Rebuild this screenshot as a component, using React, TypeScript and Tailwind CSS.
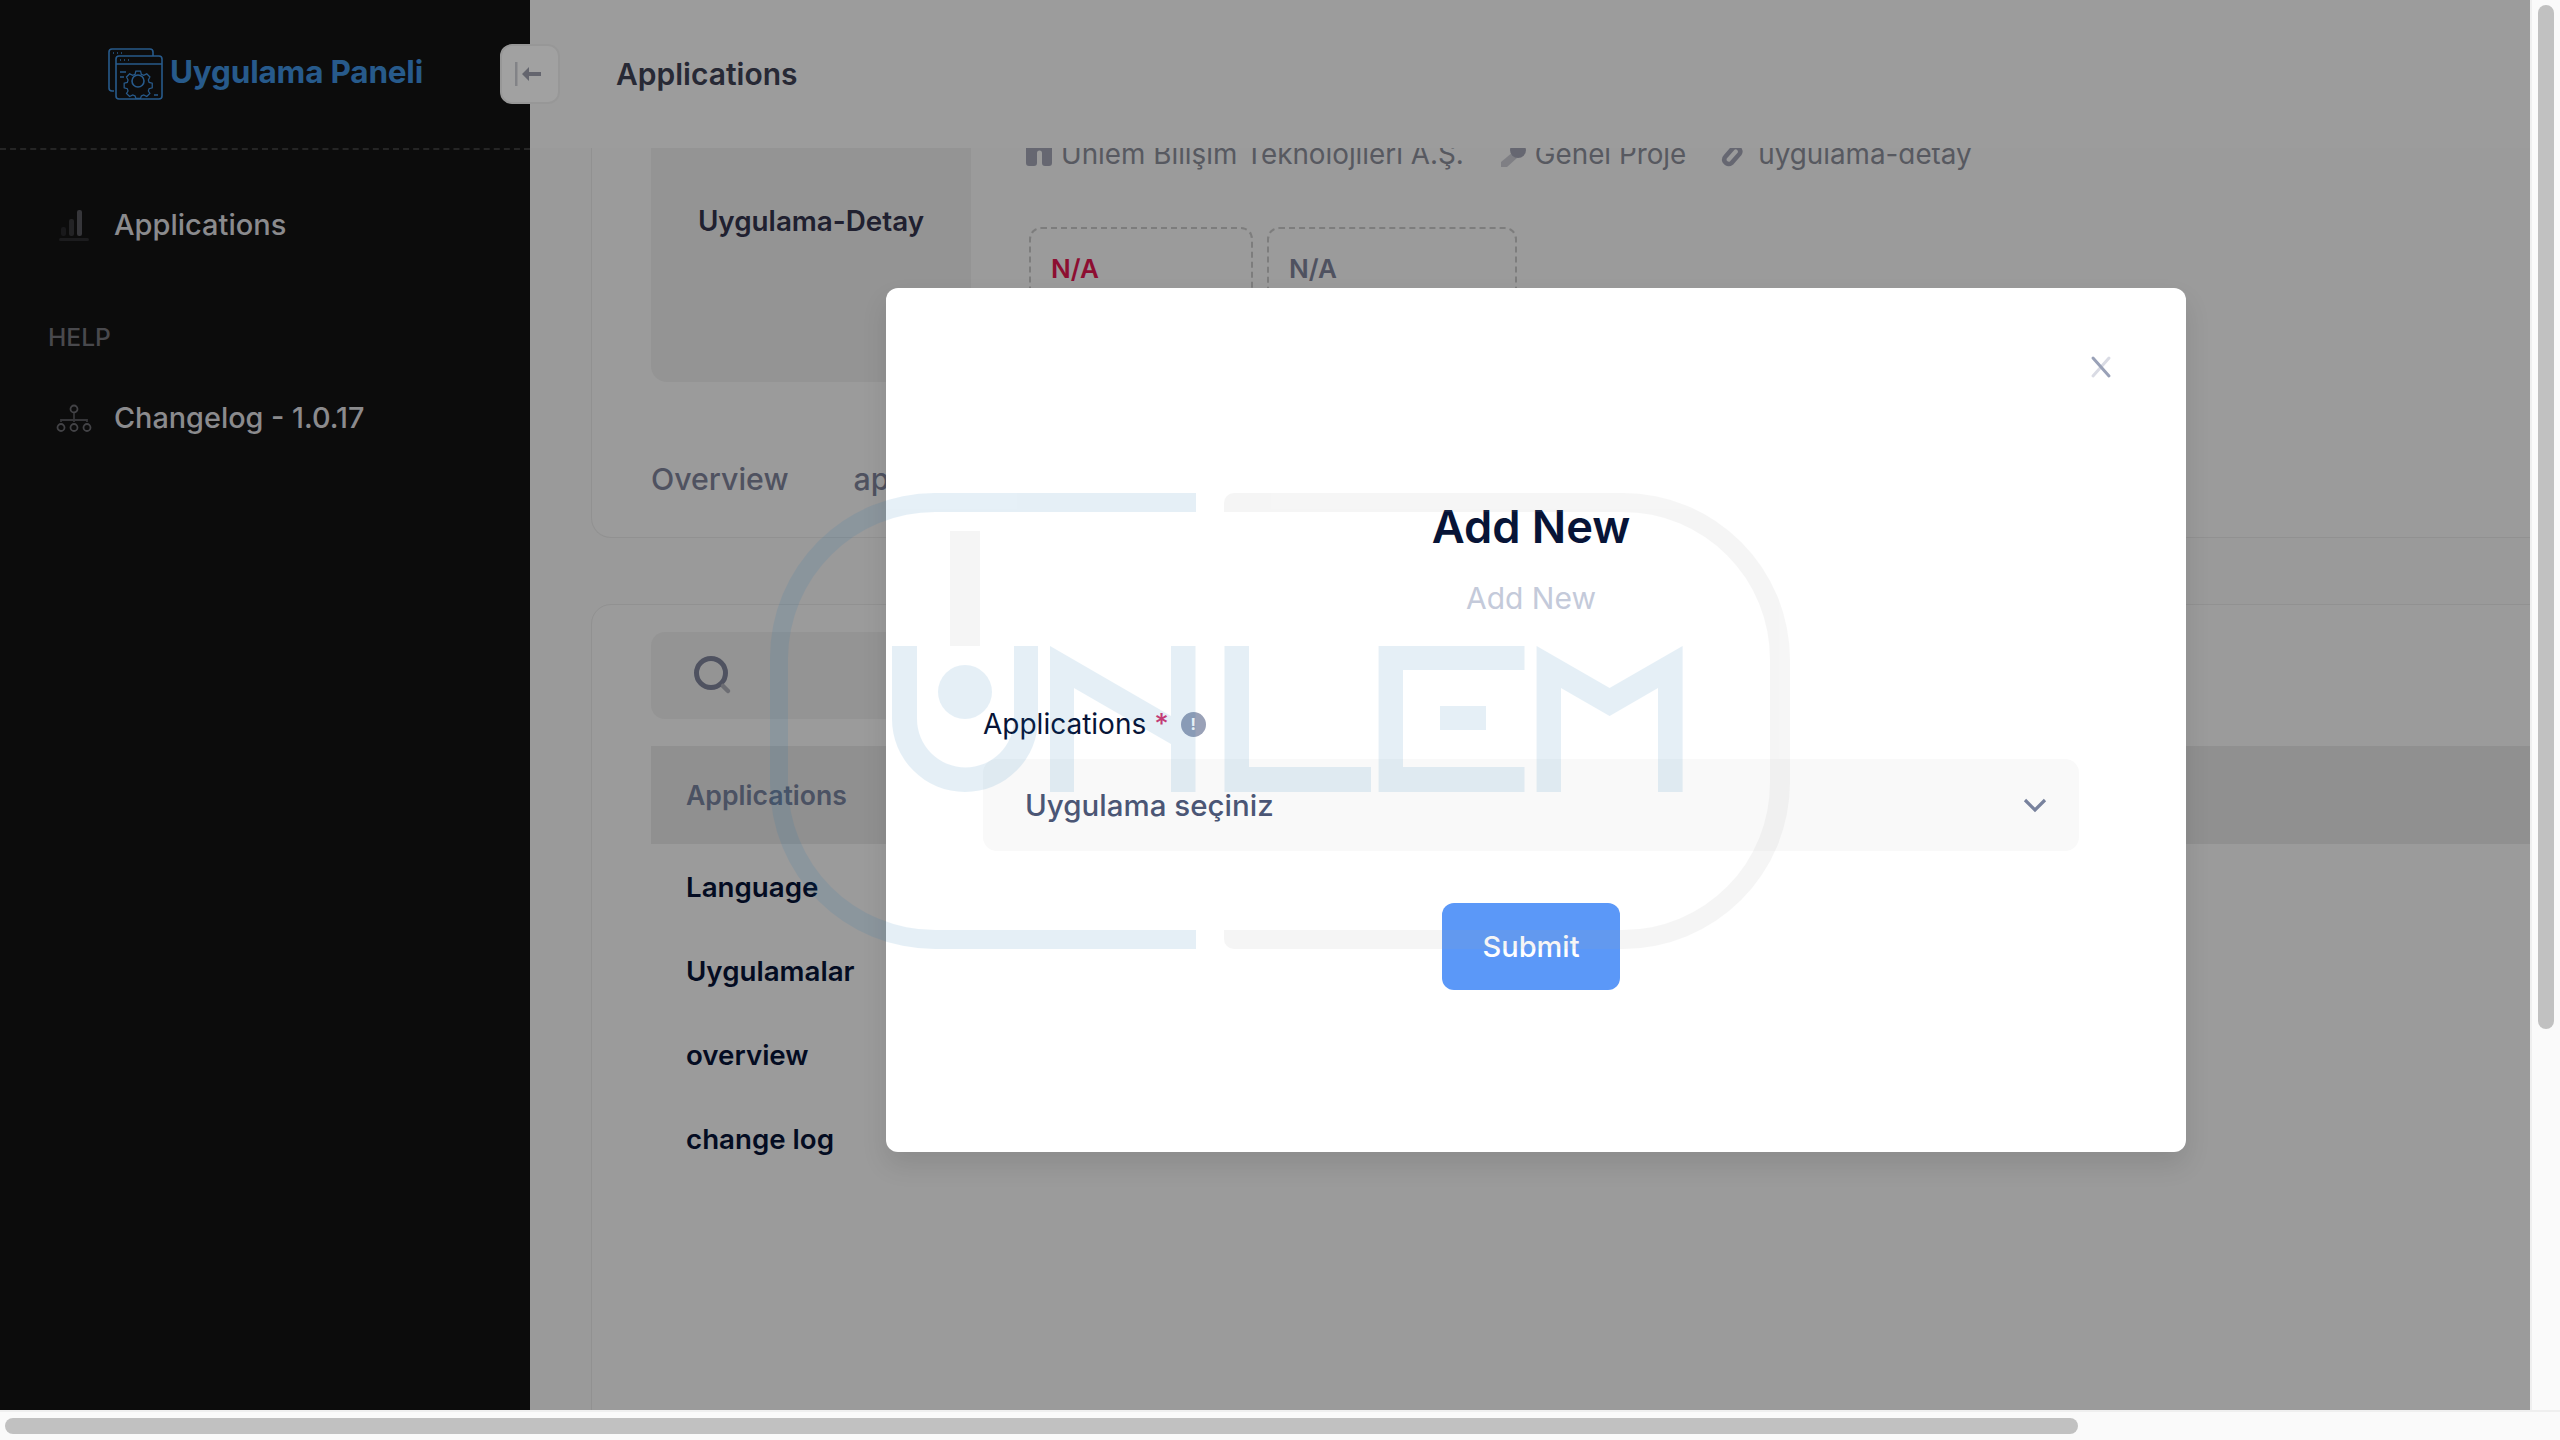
import React from "react";

function Logo() {
  return (
    <svg width="56" height="52" viewBox="0 0 56 52" fill="none" stroke="#3f8fdc" strokeWidth="1.6" className="shrink-0">
      <path d="M6 43H4a3 3 0 0 1-3-3V4a3 3 0 0 1 3-3h38a3 3 0 0 1 3 3v4" />
      <rect x="8" y="8" width="46" height="43" rx="3" />
      <path d="M8 16h46M12 24h6M12 29h4M46 47h4" />
      <path d="M12 12h1M16 12h1M20 12h1M5 5h1M9 5h1M13 5h1" strokeWidth="1.5" />
      <circle cx="30" cy="33" r="6" />
      <path d="M27 20h6l1 4 3 1.500 4-2 4 4-2 4 1 3 4 1v6l-4 1-1 3 2 3-4 4-4-2-3 1.500-1 3h-6l-1-3-3-1.500-4 2-4-4 2-3-1-3-4-1v-6l4-1 1-3-2-4 4-4 4 2 3-1.500z" transform="translate(6.800 7.500) scale(.78)" />
    </svg>
  );
}

function BarsIcon() {
  return (
    <svg width="30" height="32" viewBox="0 0 30 32" className="shrink-0">
      <rect x="2" y="18" width="5" height="9" rx="2" fill="#29292c" />
      <rect x="10" y="10" width="5" height="17" rx="2" fill="#38383c" />
      <rect x="18" y="1" width="5" height="26" rx="2" fill="#56565c" />
      <rect x="0" y="29" width="30" height="3" rx="1.500" fill="#2d2d30" />
    </svg>
  );
}

function TreeIcon() {
  return (
    <svg width="36" height="28" viewBox="0 0 36 28" fill="none" stroke="#6a6a70" strokeWidth="1.800" className="shrink-0">
      <circle cx="18" cy="5" r="3.500" />
      <path d="M18 9v7M5 18v-2h26v2M18 16v2" stroke="#55555a" />
      <circle cx="5" cy="23.500" r="3.500" />
      <circle cx="18" cy="23.500" r="3.500" />
      <circle cx="31" cy="23.500" r="3.500" />
    </svg>
  );
}

function BuildingIcon() {
  return (
    <svg width="26" height="30" viewBox="0 0 26 30" className="shrink-0 mt-[2px]">
      <path d="M5 0h16a5 5 0 0 1 5 5v22a3 3 0 0 1-3 3h-4a3 3 0 0 1-3-3V17a2.500 2.500 0 0 0-5 0v10a3 3 0 0 1-3 3H3a3 3 0 0 1-3-3V5a5 5 0 0 1 5-5z" fill="#a2a4b4" />
    </svg>
  );
}

function KeyIcon() {
  return (
    <svg width="28" height="26" viewBox="0 0 28 26" className="shrink-0 mt-[8px]">
      <path d="M14 10L2 20v5h6l10-9z" fill="#c9cad2" />
      <circle cx="19" cy="8" r="8" fill="#a2a4b4" />
    </svg>
  );
}

function LinkIcon() {
  return (
    <svg width="28" height="30" viewBox="0 0 28 30" fill="none" className="shrink-0 mt-[5px]">
      <path d="M20 8l6-7" stroke="#c9cad2" strokeWidth="4" strokeLinecap="round" />
      <path d="M6 17l7-8a4.500 4.500 0 0 1 6.500 6l-8 9a4.500 4.500 0 0 1-7-5z" stroke="#a2a4b4" strokeWidth="4.500" />
    </svg>
  );
}

function Watermark() {
  const blue = "#0a6fb3";
  const gray = "#a5a5a5";
  return (
    <svg className="absolute left-0 top-0 z-30 pointer-events-none" width="2530" height="1410" viewBox="0 0 2530 1410">
      <g opacity="0.1">
        <path fill={blue} fillRule="evenodd" d="M1196 493H935a165 165 0 0 0-165 165v126a165 165 0 0 0 165 165H1196V930H935a147 147 0 0 1-147-147V658a147 147 0 0 1 147-146H1196z" />
        <circle cx="965" cy="692" r="27" fill={blue} />
        <path fill={blue} d="M892 646h25v73a48.500 48.500 0 0 0 97 0v-73h24v73a73 73 0 0 1-146 0z" />
        <path fill={blue} d="M1050 646L1171 716V646H1195.500V792H1171V744L1074 688V792H1050z" />
        <path fill={blue} d="M1224.500 646H1249V767H1371V792H1224.500z" />
        <path fill={blue} fillRule="evenodd" d="M1378.600 646H1524.500V670H1403V767H1524.500V792H1378.600z" />
        <rect x="1440" y="706" width="46" height="24" fill={blue} />
        <path fill={blue} d="M1536.600 646L1609.600 688L1682.600 646V792H1658V688L1609.600 716L1561 688V792H1536.600z" />
        <path fill={gray} fillRule="evenodd" d="M1234 493H1623a167 167 0 0 1 167 167v122a167 167 0 0 1-167 167H1234a10 10 0 0 1-10-10v-9H1623a147 147 0 0 0 147-148V660a147 147 0 0 0-147-148H1224v-9a10 10 0 0 1 10-10z" />
        <rect x="950" y="531" width="30" height="115" fill={gray} />
      </g>
    </svg>
  );
}

export default function App() {
  return (
    <div className="relative flex flex-col h-screen w-screen overflow-hidden bg-[#fafafa] font-['Inter',sans-serif]">
      <div className="flex h-[1410px] shrink-0">
        <div className="relative flex w-[2530px] h-full overflow-hidden bg-[#f4f4f4]">
          <aside className="flex flex-col w-[530px] h-full shrink-0 bg-[#131313]">
            <div className="flex h-[150px] shrink-0 items-start gap-[6px] pl-[108px] pt-[48px] border-b-2 border-dashed border-[#3c3c3c]">
              <Logo />
              <span className="text-[31.5px] leading-[48px] font-bold text-[#3f8fdc] tracking-[-0.2px]">Uygulama Paneli</span>
            </div>
            <div className="flex items-center gap-[25px] pl-[59px] mt-[59px] h-[32px]">
              <BarsIcon />
              <span className="text-[29px] font-medium text-[#dcdce0]">Applications</span>
            </div>
            <div className="pl-[48px] mt-[81px] text-[24.6px] leading-[30px] font-medium text-[#74747a]">HELP</div>
            <div className="flex items-center gap-[22px] pl-[56px] mt-[50px] h-[32px]">
              <TreeIcon />
              <span className="text-[28.8px] font-medium text-[#dcdce0]">Changelog - 1.0.17</span>
            </div>
          </aside>

          <main className="relative flex-1 min-w-0 flex flex-col overflow-hidden">
            <header className="relative z-10 flex h-[148px] shrink-0 items-start pl-[86px] pt-[50px] bg-[#f7f7f7]">
              <span className="text-[30px] leading-[48px] font-semibold text-[#3f4254]">Applications</span>
            </header>
            <div className="flex flex-col pl-[61px] gap-[66px] min-w-[2200px]">
              <section className="relative h-[390px] border border-t-0 border-[#e6e6e6] rounded-b-[20px] bg-[#f5f5f5] pl-[59px]">
                <div className="flex h-[234px]">
                  <div className="flex w-[320px] h-[234px] justify-center items-start pt-[53px] rounded-b-[16px] bg-[#ebebeb]">
                    <span className="text-[27.8px] leading-[40px] font-semibold text-[#33344d]">Uygulama-Detay</span>
                  </div>
                  <div className="flex flex-col pl-[55px]">
                    <div className="flex items-start h-[93px] mt-[-14px] text-[27.8px] leading-[40px] text-[#8b8d99]">
                      <span className="flex gap-[9px]">
                        <BuildingIcon />
                        Ünlem Bilişim Teknolojileri A.Ş.
                      </span>
                      <span className="flex gap-[8px] ml-[35px]">
                        <KeyIcon />
                        Genel Proje
                      </span>
                      <span className="flex gap-[10px] ml-[34px]">
                        <LinkIcon />
                        uygulama-detay
                      </span>
                    </div>
                    <div className="flex gap-[14px] ml-[3px]">
                      <div className="w-[224px] h-[120px] pl-[20px] pt-[20px] border-2 border-dashed border-[#c7c7c7] rounded-[12px] text-[26px] leading-[40px] font-semibold text-[#e0174f]">N/A</div>
                      <div className="w-[250px] h-[120px] pl-[20px] pt-[20px] border-2 border-dashed border-[#c7c7c7] rounded-[12px] text-[26px] leading-[40px] font-semibold text-[#7e8299]">N/A</div>
                    </div>
                  </div>
                </div>
                <div className="flex gap-[65px] mt-[77px] text-[30.3px] leading-[40px] font-medium text-[#7e8299]">
                  <span>Overview</span>
                  <span>applications</span>
                </div>
              </section>

              <section className="h-[900px] border border-[#e6e6e6] rounded-t-[20px] bg-[#f5f5f5]">
                <div className="flex w-[600px] h-[87px] items-center ml-[59px] mt-[27px] pl-[41px] rounded-[14px] bg-[#ebebeb]">
                  <svg width="40" height="40" viewBox="0 0 40 40" fill="none" className="shrink-0">
                    <circle cx="19" cy="17" r="14.500" stroke="#7e8299" strokeWidth="5" />
                    <path d="M31 30l5 5" stroke="#acadb6" strokeWidth="4.500" strokeLinecap="round" />
                  </svg>
                </div>
                <div className="flex h-[98px] items-center mt-[27px] ml-[59px] pl-[35px] pt-[1px] bg-[#e5e5e5] text-[26.6px] font-semibold text-[#78829d]">Applications</div>
                <div className="flex flex-col ml-[94px] text-[27.7px] font-semibold text-[#071437]">
                  <div className="flex h-[84px] items-center mt-[2px]">Language</div>
                  <div className="flex h-[84px] items-center">Uygulamalar</div>
                  <div className="flex h-[84px] items-center">overview</div>
                  <div className="flex h-[84px] items-center">change log</div>
                </div>
              </section>
            </div>
          </main>

          <div className="absolute z-[15] left-[500px] top-[44px] flex w-[60px] h-[60px] items-center justify-center pr-[2px] rounded-[12px] border-2 border-[#f0f0f0] bg-white">
            <svg width="30" height="24" viewBox="0 0 30 24" className="shrink-0">
              <rect x="1" y="0" width="2.500" height="24" fill="#cfd0d6" />
              <path d="M8 12L15 5V10H27V14H15V19z" fill="#9fa1ae" />
            </svg>
          </div>

          <div className="absolute z-20 inset-0 bg-black/[0.37] pl-[886px] pt-[288px]">
            <div className="relative flex flex-col items-stretch w-[1300px] h-[864px] rounded-[12px] bg-white shadow-[0_13px_26px_rgba(0,0,0,0.1)]">
              <svg width="24" height="24" viewBox="0 0 24 24" className="absolute left-[1203px] top-[67px]" strokeWidth="3" strokeLinecap="round">
                <path d="M20 3L4 21" stroke="#d9dbe4" />
                <path d="M4 3l16 18" stroke="#99a1b7" />
              </svg>
              <div className="flex flex-col items-center w-[1290px]">
                <h1 className="mt-[209px] text-[45.3px] leading-[60px] font-semibold text-[#071437]">Add New</h1>
                <p className="mt-[21px] text-[30px] leading-[40px] font-normal text-[#c4cada]">Add New</p>
              </div>
              <div className="flex items-center mt-[86px] pl-[97px] h-[40px]">
                <span className="text-[28px] font-normal text-[#071437]">Applications</span>
                <span className="ml-[8px] text-[28px] font-medium text-[#d9376e]">*</span>
                <span className="flex ml-[12px] w-[25px] h-[25px] items-center justify-center rounded-full bg-[#99a1b7] text-[16px] leading-none font-bold text-white">!</span>
              </div>
              <div className="flex items-center justify-between w-[1096px] h-[92px] mt-[15px] ml-[97px] pl-[42px] pr-[32px] rounded-[14px] bg-[#f9f9f9]">
                <span className="text-[29.5px] font-medium text-[#4b5675]">Uygulama seçiniz</span>
                <svg width="24" height="16" viewBox="0 0 24 16" fill="none" className="shrink-0">
                  <path d="M2 3l10 10L22 3" stroke="#78829d" strokeWidth="3.200" />
                </svg>
              </div>
              <div className="flex justify-center w-[1290px] mt-[52px]">
                <button className="w-[178px] h-[87px] rounded-[12px] bg-[#5b98f8] text-[29px] font-medium text-white">Submit</button>
              </div>
            </div>
          </div>

          <Watermark />
        </div>

        <div className="flex flex-1 border-l-2 border-[#efefef] bg-[#fafafa] pl-[6px] pt-[5px]">
          <div className="w-[16px] h-[1024px] rounded-full bg-[#c1c1c1]" />
        </div>
      </div>
      <div className="flex-1 border-t-2 border-[#efefef] bg-[#fafafa] pl-[5px] pt-[6px]">
        <div className="w-[2073px] h-[16px] rounded-full bg-[#c1c1c1]" />
      </div>
    </div>
  );
}
